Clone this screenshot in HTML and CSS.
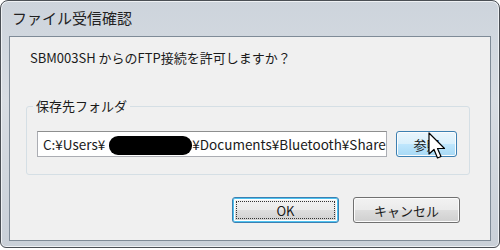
FILE: index.html
```html
<!DOCTYPE html>
<html lang="ja">
<head>
    <meta charset="UTF-8">
    <title>ファイル受信確認</title>
    <link rel="stylesheet" href="styles.css">
</head>
<body>
    <div class="window">
        <div class="title">ファイル受信確認</div>
        <div class="client">
            <p class="msg">SBM003SH からのFTP接続を許可しますか？</p>
            <fieldset class="group">
                <legend>保存先フォルダ</legend>
                <div class="row">
                    <div class="field">C:¥Users¥<span class="redact"></span>¥Documents¥Bluetooth¥Share</div>
                    <div class="btn hover">参照
                        <svg class="cursor" width="19" height="28" viewBox="0 0 19 28">
                            <path d="M1 1 L1 22 L6 17.5 L9.5 26 L13 24.5 L9.5 16.5 L16.5 16.5 Z" fill="#fff" stroke="#000" stroke-width="1.2" stroke-linejoin="round"/>
                        </svg>
                    </div>
                </div>
            </fieldset>
            <div class="buttons">
                <div class="btn default"><span class="focus">OK</span></div>
                <div class="btn">キャンセル</div>
            </div>
        </div>
    </div>
</body>
</html>
```

FILE: styles.css
```css
* {
    margin: 0;
    padding: 0;
    box-sizing: border-box;
}
body {
    background: #fff;
    font-family: "Noto Sans CJK JP", "Noto Sans", sans-serif;
    font-size: 12px;
    color: #1a1a1a;
}
.window {
    width: 500px;
    height: 248px;
    border: 1px solid #4a4f55;
    border-radius: 8px 8px 6px 6px;
    background: linear-gradient(to bottom, #cdd4dc 0%, #d8dde3 40%, #c9d0d8 100%);
    padding: 0 8px 6px 8px;
    display: flex;
    flex-direction: column;
    box-shadow: inset 0 0 0 1px #eef1f4;
}
.title {
    height: 35px;
    line-height: 34px;
    padding-left: 3px;
    font-size: 15px;
    color: #222;
}
.client {
    flex: 1;
    background: #f0f0f0;
    border: 1px solid #7f8b97;
    padding: 10px 20px 0 16px;
    display: flex;
    flex-direction: column;
}
.msg {
    font-size: 13px;
    padding-left: 4px;
    line-height: 22px;
}
.group {
    margin-top: 28px;
    border: 1px solid #d5dfe5;
    border-radius: 3px;
    padding: 16px 10px 17px 10px;
}
.group legend {
    margin-left: -4px;
    padding: 0 3px;
    font-size: 13px;
    line-height: 18px;
}
.row {
    display: flex;
    gap: 9px;
}
.field {
    width: 350px;
    height: 26px;
    background: #fff;
    border: 1px solid #abadb3;
    border-top-color: #8e8f8f;
    padding-left: 5px;
    line-height: 24px;
    font-size: 13.5px;
    white-space: nowrap;
    overflow: hidden;
}
.redact {
    display: inline-block;
    width: 83px;
    height: 19px;
    margin-left: 4px;
    background: #000;
    border-radius: 9px;
    vertical-align: -5px;
}
.btn {
    position: relative;
    height: 26px;
    border: 1px solid #707070;
    border-radius: 3px;
    background: linear-gradient(to bottom, #f2f2f2 0%, #ebebeb 48%, #dddddd 52%, #cfcfcf 100%);
    box-shadow: inset 0 0 0 1px #fcfcfc;
    display: flex;
    justify-content: center;
    align-items: center;
    font-size: 13px;
}
.row .btn {
    width: 61px;
}
.btn.hover {
    border-color: #3c7fb1;
    background: linear-gradient(to bottom, #eaf6fd 0%, #d9f0fc 48%, #bee6fd 52%, #a7d9f5 100%);
}
.cursor {
    position: absolute;
    left: 31px;
    top: 0;
}
.buttons {
    margin-top: 22px;
    display: flex;
    justify-content: flex-end;
    gap: 14px;
    padding-right: 10px;
}
.buttons .btn {
    width: 107px;
}
.btn.default {
    border-color: #3c7fb1;
    box-shadow: inset 0 0 0 1px #4ec3f0, inset 0 0 0 2px #fff;
}
.focus {
    position: absolute;
    inset: 3px;
    border: 1px dotted #333;
    display: flex;
    justify-content: center;
    align-items: center;
}
```
